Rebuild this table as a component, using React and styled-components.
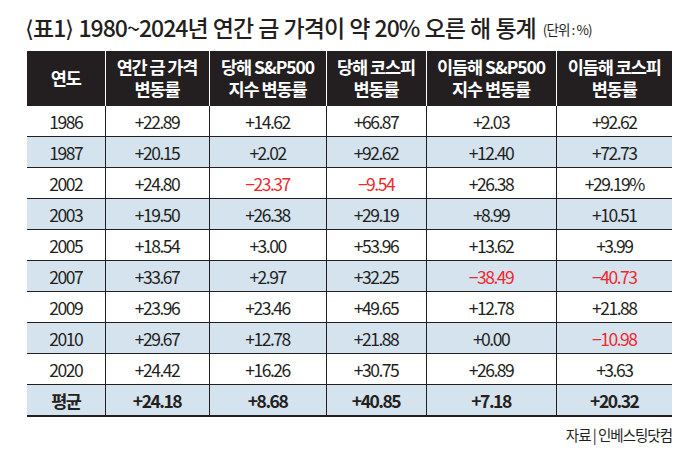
import React from "react";
import styled, { createGlobalStyle } from "styled-components";

const GlobalStyle = createGlobalStyle`
  body {
    margin: 0;
    background: #ffffff;
    font-family: "Noto Sans CJK KR", "Noto Sans", sans-serif;
    color: #231f20;
  }
`;

/* Page frame */
const Page = styled.div`
  width: 700px;
  height: 450px;
  padding: 3px 28px 0 27px;
  box-sizing: border-box;
  display: flex;
  flex-direction: column;
`;

/* Title line */
const Title = styled.h2`
  margin: 0 0 0 -2px;
  height: 48px;
  display: flex;
  align-items: center;
  font-size: 23px;
  font-weight: 500;
  letter-spacing: -1px;
  word-spacing: 1px;
  color: #231f20;
  white-space: nowrap;
`;

const Unit = styled.span`
  font-size: 13.5px;
  font-weight: 400;
  letter-spacing: -0.9px;
  word-spacing: 0;
  margin-left: 7px;
  margin-top: 4px;
`;

const Table = styled.table`
  width: 645px;
  border-collapse: collapse;
  table-layout: fixed;
  border-bottom: 2px solid #231f20;
`;

const HeadCell = styled.th`
  height: 54px;
  padding: 0;
  background: #231f20;
  color: #ffffff;
  font-size: 17.5px;
  font-weight: 700;
  line-height: 22px;
  letter-spacing: -1.1px;
  text-align: center;
  white-space: nowrap;
  border-left: 1px solid #ffffff;

  &:first-child {
    border-left: none;
  }
`;

const Row = styled.tr`
  background: ${(props) => (props.$shaded ? "#d5e3ee" : "#ffffff")};
  border-top: 1px solid #231f20;
`;

const Cell = styled.td`
  height: 30px;
  padding: 0;
  text-align: center;
  font-size: 17.5px;
  font-weight: ${(props) => (props.$bold ? 700 : 400)};
  letter-spacing: -1.5px;
  color: ${(props) => (props.$neg ? "#ee2a2f" : "#231f20")};
  border-left: 1px solid #231f20;

  &:first-child {
    border-left: none;
  }
`;

const Source = styled.div`
  margin-top: 7px;
  text-align: right;
  font-size: 14.5px;
  letter-spacing: -1px;
  color: #231f20;
`;

const widths = [78, 104, 117, 100, 130, 116];

const headers = [
  ["연도"],
  ["연간 금 가격", "변동률"],
  ["당해 S&P500", "지수 변동률"],
  ["당해 코스피", "변동률"],
  ["이듬해 S&P500", "지수 변동률"],
  ["이듬해 코스피", "변동률"],
];

const rows = [
  ["1986", "+22.89", "+14.62", "+66.87", "+2.03", "+92.62"],
  ["1987", "+20.15", "+2.02", "+92.62", "+12.40", "+72.73"],
  ["2002", "+24.80", "−23.37", "−9.54", "+26.38", "+29.19%"],
  ["2003", "+19.50", "+26.38", "+29.19", "+8.99", "+10.51"],
  ["2005", "+18.54", "+3.00", "+53.96", "+13.62", "+3.99"],
  ["2007", "+33.67", "+2.97", "+32.25", "−38.49", "−40.73"],
  ["2009", "+23.96", "+23.46", "+49.65", "+12.78", "+21.88"],
  ["2010", "+29.67", "+12.78", "+21.88", "+0.00", "−10.98"],
  ["2020", "+24.42", "+16.26", "+30.75", "+26.89", "+3.63"],
];

const average = ["평균", "+24.18", "+8.68", "+40.85", "+7.18", "+20.32"];

export default function App() {
  return (
    <>
      <GlobalStyle />
      <Page>
        <Title>
          ⟨표1⟩ 1980~2024년 연간 금 가격이 약 20% 오른 해 통계
          <Unit>(단위 : %)</Unit>
        </Title>
        <Table>
          <colgroup>
            {widths.map((w, i) => (
              <col key={i} style={{ width: w }} />
            ))}
          </colgroup>
          <thead>
            <tr>
              {headers.map((h, i) => (
                <HeadCell key={i}>
                  {h.length > 1 ? (
                    <>
                      {h[0]}
                      <br />
                      {h[1]}
                    </>
                  ) : (
                    h[0]
                  )}
                </HeadCell>
              ))}
            </tr>
          </thead>
          <tbody>
            {rows.map((r, i) => (
              <Row key={r[0]} $shaded={i % 2 === 1}>
                {r.map((v, j) => (
                  <Cell key={j} $neg={v.startsWith("−")}>
                    {v}
                  </Cell>
                ))}
              </Row>
            ))}
            <Row $shaded>
              {average.map((v, j) => (
                <Cell key={j} $bold>
                  {v}
                </Cell>
              ))}
            </Row>
          </tbody>
        </Table>
        <Source>자료 | 인베스팅닷컴</Source>
      </Page>
    </>
  );
}
